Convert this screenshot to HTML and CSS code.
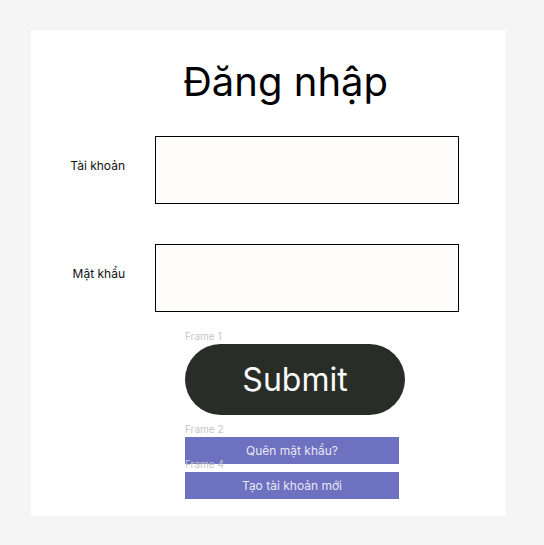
FILE: index.html
```html
<!DOCTYPE html>
<html lang="vi">
<head>
<meta charset="utf-8">
<title>Đăng nhập</title>
<link rel="stylesheet" href="styles.css">
</head>
<body>
<div class="card">
  <h1 class="title">Đăng nhập</h1>
  <div class="row">
    <label class="label" for="acc">Tài khoản</label>
    <input class="field" id="acc" type="text">
  </div>
  <div class="row row-2">
    <label class="label" for="pw">Mật khẩu</label>
    <input class="field" id="pw" type="password">
  </div>
  <div class="actions">
    <div class="frame">
      <span class="frame-name">Frame 1</span>
      <button class="submit" type="button">Submit</button>
    </div>
    <div class="frame frame-2">
      <span class="frame-name">Frame 2</span>
      <button class="link-btn" type="button">Quên mật khẩu?</button>
    </div>
    <div class="frame frame-4">
      <span class="frame-name">Frame 4</span>
      <button class="link-btn" type="button">Tạo tài khoản mới</button>
    </div>
  </div>
</div>
</body>
</html>
```

FILE: styles.css
```css
html, body {
  margin: 0;
  padding: 0;
}
body {
  background: #f5f5f5;
  font-family: Inter, "Noto Sans", sans-serif;
  padding: 30px 0 0 31px;
}
.card {
  width: 475px;
  height: 486px;
  background: #ffffff;
  box-sizing: border-box;
  padding-top: 28px;
  display: flex;
  flex-direction: column;
}
.title {
  margin: 0 0 30px 152px;
  font-size: 40px;
  line-height: 48px;
  font-weight: 400;
  color: #000;
}
.row {
  display: flex;
  align-items: flex-start;
}
.row-2 {
  margin-top: 40px;
}
.label {
  width: 94px;
  margin-right: 30px;
  margin-top: 22px;
  text-align: right;
  font-size: 12px;
  line-height: 15px;
  color: #111;
}
.field {
  width: 304px;
  height: 68px;
  box-sizing: border-box;
  margin: 0;
  border: 1px solid #000;
  background: #fffdfb;
  outline: none;
  padding: 0 8px;
}
.actions {
  margin-left: 154px;
  margin-top: 32px;
  display: flex;
  flex-direction: column;
  align-items: flex-start;
}
.frame {
  position: relative;
}
.frame-2 {
  margin-top: 22px;
}
.frame-4 {
  margin-top: 8px;
}
.frame-name {
  position: absolute;
  left: 0;
  bottom: calc(100% + 2px);
  font-size: 10px;
  line-height: 12px;
  color: #c6c6c6;
  white-space: nowrap;
  z-index: 1;
}
.submit {
  display: block;
  width: 220px;
  height: 71px;
  margin: 0;
  border: none;
  border-radius: 36px;
  background: #282d27;
  color: #fafafa;
  font-family: Inter, "Noto Sans", sans-serif;
  font-size: 32px;
  line-height: 40px;
  padding: 0;
}
.link-btn {
  display: block;
  width: 214px;
  height: 27px;
  margin: 0;
  border: none;
  border-radius: 0;
  background: #6e70c0;
  color: #e8e8f6;
  font-family: Inter, "Noto Sans", sans-serif;
  font-size: 12px;
  line-height: 15px;
  padding: 0;
}
```
